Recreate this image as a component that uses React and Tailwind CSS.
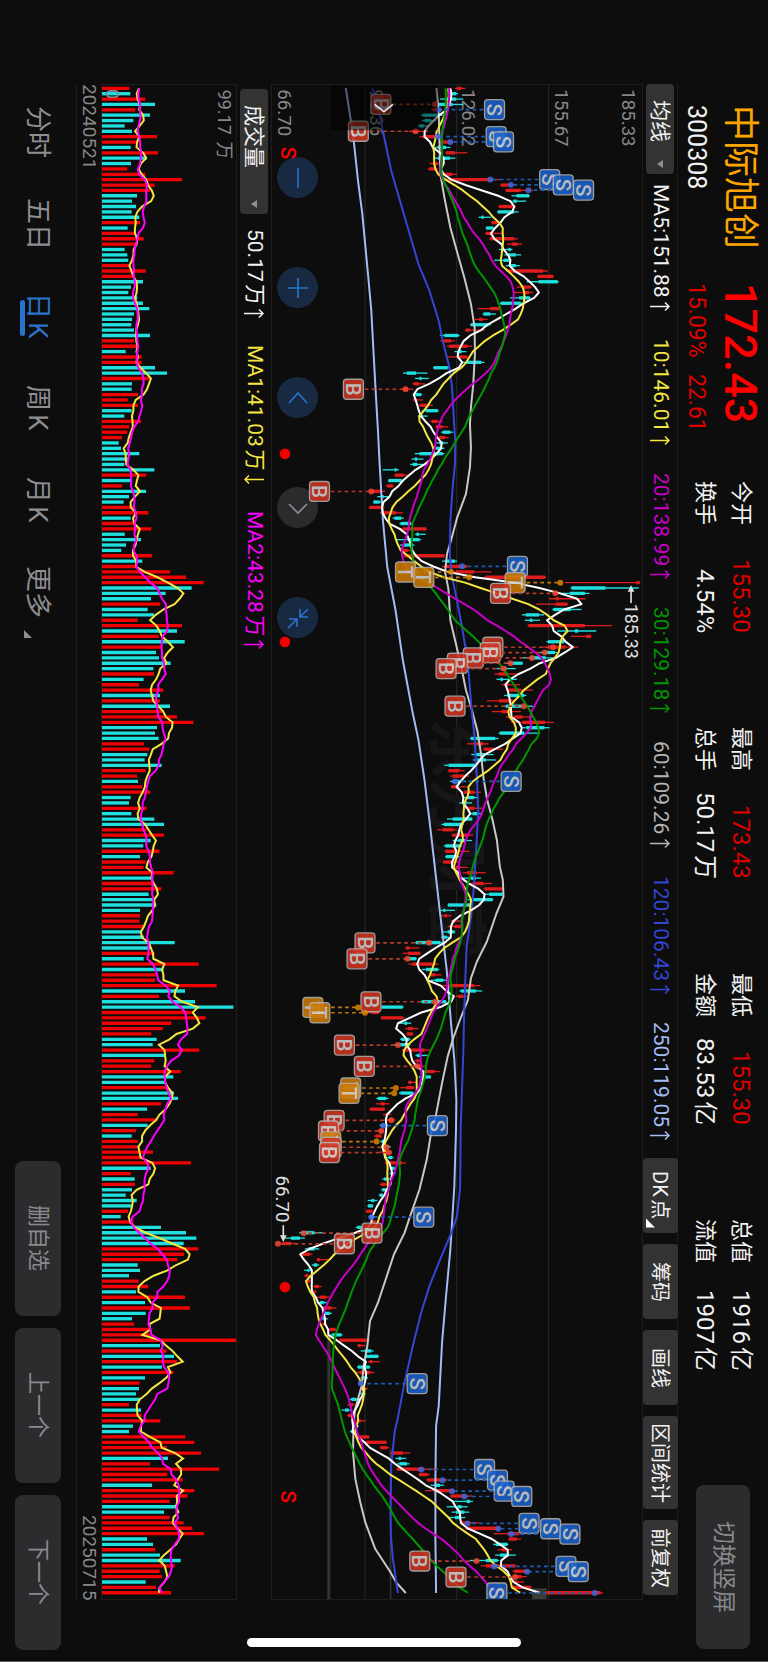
const RED = '#e01b1b';
const CYAN = '#1fdfdf';

const UP = 'R';

// [direction, low, body start, body end, high], one entry per trading day
const CANDLES = `R597,604,616,628 C583,588,600,606 C552,570,600,622 C530,545,590,622 R526,530,545,560 C495,500,545,560 C497,505,525,540 C485,490,503,515
R458,470,487,516 R490,500,545,550 R550,555,583,592 C537,545,570,583 R568,570,597,634 C533,545,582,598 R520,530,545,550 R515,520,540,545
R548,555,588,603 R565,580,712,732 R733,735,757,770 R748,750,795,832 C767,782,820,822 C770,773,783,811 R727,730,770,781 C724,726,775,788
C668,677,683,705 R706,708,725,735 C689,691,712,720 R687,690,708,743 R700,703,775,786 R753,768,785,799 C729,758,765,770 C746,758,780,796
C715,743,760,762 C750,763,780,792 R751,757,862,876 R844,846,893,894 C813,848,906,909 R783,800,825,828 R775,805,820,832 C763,790,822,825
C731,735,795,800 R665,703,730,733 C680,683,703,720 R657,670,680,695 C642,645,698,705 R627,629,642,687 C551,565,607,611 R553,563,585,597
R572,580,635,648 C595,608,617,631 R572,608,633,636 C615,633,676,686 C531,533,575,582 C441,452,480,514 C477,490,496,518 R469,473,488,507
R438,442,455,472 C472,478,495,498 R469,475,482,501 R487,492,515,530 C497,510,545,548 C485,488,500,515 R523,527,545,560 R537,540,560,577
C555,560,583,592 R540,550,567,578 C540,550,562,575 C530,540,555,565 C476,490,560,565 C466,476,483,502 C462,470,483,502 C379,415,421,428
R414,416,443,460 C395,397,437,440 R388,393,410,413 R340,342,375,387 C363,375,382,400 C350,352,370,380 R337,340,375,385 R371,378,420,440
C409,415,435,443 C430,433,465,470 R430,440,510,513 C477,481,488,509 C422,455,490,495 C432,440,470,475 R430,435,455,465 R442,445,565,567
C558,568,597,603 R558,565,632,636 R565,600,655,707 R685,690,868,871 R928,1143,1153,1155 C945,948,1050,1150 C905,943,988,1002 R880,900,910,990
R841,900,935,937 C890,893,945,978 C798,810,850,865 C807,822,830,853 R815,818,988,1070 C905,958,968,1022 R945,992,1006,1008 C872,877,925,935
R860,875,930,968 C852,868,898,905 C800,822,870,905 C745,765,800,802 C722,735,752,780 R716,728,755,790 C722,734,741,783 R737,745,757,792
R750,758,795,832 C745,755,805,812 R693,730,770,775 C745,750,797,832 R708,738,760,795 R750,775,800,830 R765,800,868,895 C800,812,866,882
C728,732,805,847 C642,645,718,728 R633,658,682,698 R682,685,713,742 C646,660,685,713 C652,665,690,720 C565,578,657,660 R575,578,610,627
R583,590,625,640 C583,590,610,630 R584,586,605,632 R612,625,655,675 C622,635,655,665 C610,620,632,648 R627,633,655,678 C640,650,665,675
C573,590,648,650 C556,563,618,623 R543,560,592,602 R585,590,638,652 C590,607,630,648 C563,568,610,618 R566,568,600,640 C567,570,605,610
R559,562,595,610 R597,600,610,636 R620,633,662,689 C617,645,660,675 R640,650,683,709 R683,687,740,741 C686,700,740,741 C635,650,710,712
C574,576,645,650 C553,562,568,597 R555,565,573,586 R585,592,598,620 R575,595,615,620 C560,575,595,598 C555,560,573,580 C477,480,553,558
R447,450,460,490 R439,455,492,494 C452,455,480,482 R457,468,530,547 C497,510,545,550 R520,525,538,557 C525,538,562,572 R545,580,655,673
C610,615,660,679 R600,606,622,633 C495,497,570,572 C375,376,440,442 R325,345,368,370 R373,375,440,445 C430,445,453,465 R446,455,470,487
R450,453,470,472 C432,435,460,463 C414,430,460,463 R437,445,505,525 C478,482,495,515 R467,480,490,497 R470,483,497,510 R497,505,535,551
C488,505,524,525 R455,457,466,482 R432,450,473,475 C428,433,470,475 C360,365,390,397 R359,373,385,400 R338,342,385,387 R380,388,395,405
R390,398,412,418 C370,375,390,395 R365,370,380,385 R353,358,375,378 C372,376,384,388 C377,383,398,404 R368,385,402,408 C390,397,408,412
R385,390,437,450 C400,403,415,418 C400,403,413,418 C378,383,393,405 R370,375,388,395 C375,378,392,400 C367,370,380,387 C334,345,354,363
C333,335,350,351 R328,330,348,349 C337,340,352,355 R340,345,360,368 C298,303,316,318 C128,133,174,198 C86,103,130,145 R57,78,103,115
C145,155,174,188 R130,137,160,168 R180,182,190,217 C166,172,182,188 C143,153,158,165 R143,147,155,160 R145,152,160,167 R168,175,187,195
R163,168,177,180 R178,190,210,224 C183,190,202,213 R195,200,225,240 C202,205,220,226 C195,200,208,214 R195,200,208,212 R216,220,237,240
C222,228,255,258 R247,250,330,340 R302,305,313,328 C313,325,345,352 C325,328,366,367 R335,340,348,370 C302,305,340,342 R298,310,342,355
C313,320,328,335 C308,310,320,323 R310,315,325,335 C310,315,323,328 C280,285,300,312 R273,277,290,294 C255,266,277,285 R272,275,285,290
R295,305,313,328 C293,297,305,308 C280,284,293,298 R290,300,338,340 R325,330,390,392 R370,373,393,399 R400,405,440,462 C418,427,435,450
C423,430,452,460 R420,423,505,536 R487,489,515,522 R511,513,560,574 C524,535,552,564 R507,540,595,597 R581,585,628,648 C590,632,642,651
C572,605,617,635 C587,600,625,640 C577,597,613,628 R614,616,640,670 R628,630,730,733 R713,755,790,792 R757,760,783,796 C712,720,755,757
R726,738,755,768 C718,733,757,780 C641,690,725,730 R675,690,779,780 R770,775,815,820 R760,772,797,813 R768,775,785,805 R765,770,825,828
R870,872,1035,1042`
  .split(/\s+/)
  .map((s) => {
    const [low, from, to, high] = s.slice(1).split(',').map(Number);
    return { up: s[0] === UP, low, from, to, high };
  });

const VOLUMES = `R82 C85 R130 C159 R100 C144 C94 C68 C90 R165 R109 C86 R168 C134 C87 R75 R130 R240 R158 R144
C105 C90 C102 C89 C112 R114 C77 R102 R125 R102 C68 C76 C79 R86 R131 R99 C123 C87 C79 C106
C123 C142 C96 C90 C88 C96 C144 R96 R110 C71 R119 R119 C159 C195 R142 C90 C89 R108 R77 R108
C89 C67 R117 R82 R76 R60 C50 C57 C112 C78 C67 C157 R132 C90 R60 C132 C81 C65 R94 R139
C86 R99 R148 C68 C117 C72 C58 R150 C121 R106 R204 R252 R305 C269 C191 C147 R175 C137 C156 R107
R240 C225 R170 C248 R181 C162 C171 C206 C154 R156 C125 R111 R184 C174 R174 C204 R182 R225 R274 C165
C159 C170 R126 R142 C136 C128 C179 R131 R105 C108 R121 R145 C86 C81 R134 C88 C157 C186 R134 R186
C146 C124 R172 C114 R131 R125 R215 C154 R152 R178 C140 C159 C163 C114 R114 R112 R126 C119 C126 C218
C144 R158 C125 R290 C184 R164 R159 R344 C249 R171 C279 C394 R268 R311 R208 R182 R148 C164 C152 R292
C190 R157 R148 R236 C214 C192 R199 C216 C228 R177 C135 R107 R166 C137 R102 C89 R107 R111 R153 R119
R267 C146 R86 C98 R99 C90 C71 C104 C89 R79 C56 R94 C177 C252 C283 C245 R289 R246 R226 C107
C114 C81 R110 R139 C102 R249 C129 R264 C131 C90 R96 R144 R144 R402 C174 R194 C216 R225 C180 R214
C129 R113 C111 C102 C114 R81 C117 R119 R175 C93 C81 R250 R277 R194 R297 C198 R144 R352 R196 R242
C150 R277 R256 R203 C224 C186 R203 R245 R271 R306 C135 C153 R160 C174 C236 R218 R173 R180 C131 R162
R207`
  .split(/\s+/)
  .map((s) => ({ up: s[0] === UP, value: Number(s.slice(1)) }));

const STEP = 16.14;
const dayY = (i) => 52 + i * STEP;

const average = (values, size, seed) =>
  values.map((_, i) => {
    let sum = 0;
    for (let k = i - size + 1; k <= i; k++) sum += k < 0 ? seed : values[k];
    return sum / size;
  });

const toPoints = (values) => values.map((v, i) => `${v.toFixed(1)},${dayY(i).toFixed(1)}`).join(' ');

const CLOSES = CANDLES.map((c) => (c.up ? c.to : c.from));
const VOLUME_VALUES = VOLUMES.map((v) => v.value);

const MA_LINES = [
  {
    color: '#a4bcf5',
    points:
      '268,51 290,190 305,330 318,430 335,610 345,720 352,850 358,960 365,1080 370,1180 380,1350 393,1490 418,1620 440,1770 468,1920 487,2010 505,2129 520,2250 535,2380 552,2530 572,2700 585,2860 595,2970 601,3090 600,3180 595,3350 583,3540 570,3680 558,3820 548,4010 540,4070 538,4230 538,4410 540,4572',
  },
  {
    color: '#c8c8c8',
    points:
      '541,51 548,130 553,310 565,380 583,470 605,550 625,620 645,700 656,770 657,850 652,940 645,1010 642,1060 645,1130 642,1190 630,1270 604,1340 585,1410 573,1450 567,1505 577,1555 583,1650 602,1730 618,1800 630,1860 648,1920 665,1985 675,2050 683,2125 694,2190 710,2250 723,2310 732,2390 741,2430 743,2480 722,2530 693,2615 663,2675 645,2725 636,2790 612,2850 590,2910 575,2960 558,3040 537,3150 525,3190 512,3270 490,3360 462,3440 445,3490 413,3555 385,3640 365,3700 341,3755 333,3830 322,3890 316,3950 303,3995 295,4025 291,4080 290,4150 297,4230 312,4300 327,4360 357,4440 400,4505 420,4540 449,4572',
  },
  {
    color: '#3346d6',
    points:
      '348,51 365,110 382,190 405,300 440,420 487,580 520,660 548,750 560,810 580,890 588,950 595,1070 598,1110 597,1180 590,1250 583,1350 581,1450 588,1520 603,1590 618,1670 635,1770 648,1930 655,1990 663,2125 667,2220 662,2320 653,2460 645,2540 632,2630 628,2730 624,2850 622,2950 618,3060 614,3175 613,3300 612,3360 603,3440 588,3485 548,3580 520,3650 495,3730 470,3830 445,3940 425,4045 415,4090 405,4190 403,4330 404,4400 410,4470 425,4572',
  },
  { color: '#ffffff', points: toPoints(average(CLOSES, 5, 575)) },
  { color: '#f5e642', points: toPoints(average(CLOSES, 10, 572)) },
  { color: '#c800c8', points: toPoints(average(CLOSES, 20, 577)) },
  { color: '#009600', points: toPoints(average(CLOSES, 30, 567)) },
];

// [kind, badge x, y, anchor x on the candle]
const TRADES = [
  ['B', 374, 100, 537], ['S', 716, 116, 548], ['B', 306, 181, 478], ['S', 721, 197, 545], ['S', 743, 213, 583],
  ['S', 882, 326, 703], ['S', 923, 342, 765], ['S', 984, 358, 818], ['B', 291, 956, 448], ['B', 189, 1263, 345],
  ['S', 785, 1488, 618], ['T', 448, 1505, 585], ['T', 503, 1521, 640], ['T', 778, 1537, 914], ['B', 734, 1569, 899],
  ['B', 711, 1731, 892], ['B', 703, 1747, 867], ['B', 652, 1763, 829], ['B', 604, 1779, 764], ['B', 570, 1795, 744],
  ['B', 597, 1908, 804], ['S', 766, 2134, 597], ['B', 326, 2619, 519], ['B', 302, 2667, 454], ['B', 344, 2796, 537],
  ['T', 169, 2813, 305], ['T', 190, 2829, 326], ['B', 264, 2926, 425], ['B', 324, 2990, 484], ['T', 283, 3055, 419],
  ['T', 278, 3071, 414], ['B', 233, 3152, 405], ['S', 544, 3168, 381], ['B', 216, 3184, 375], ['T', 223, 3216, 361],
  ['B', 224, 3233, 391], ['B', 219, 3249, 398], ['S', 503, 3443, 345], ['B', 347, 3491, 142], ['B', 264, 3523, 64],
  ['S', 483, 3943, 313], ['S', 686, 4201, 495], ['S', 725, 4233, 560], ['S', 745, 4266, 588], ['S', 798, 4282, 625],
  ['S', 820, 4363, 635], ['S', 885, 4379, 727], ['S', 943, 4395, 766], ['B', 491, 4476, 662], ['S', 931, 4492, 715],
  ['S', 968, 4508, 814], ['B', 600, 4524, 778], ['S', 723, 4572, 1018],
];

const TRADE_COLORS = {
  B: { badge: '#cf3422', line: '#b93a28', dot: '#f0432f' },
  S: { badge: '#1a62cb', line: '#1b5cb8', dot: '#3f66d8' },
  T: { badge: '#cc7a05', line: '#c47808', dot: '#dd8400' },
};

const AXIS = [
  ['185.33', 1120],
  ['155.67', 917],
  ['126.02', 639],
  ['96.36', 361],
  ['66.70', 84],
];

const AVERAGES = [
  { label: 'MA5:151.88', className: 'text-[#f2f2f2]' },
  { label: '10:146.01', className: 'text-[#f5e642]' },
  { label: '20:138.99', className: 'text-[#c800c8]' },
  { label: '30:129.18', className: 'text-[#009600]' },
  { label: '60:109.26', className: 'text-[#b4b4b4]' },
  { label: '120:106.43', className: 'text-[#3346d6]' },
  { label: '250:119.05', className: 'text-[#a4bcf5]' },
];

const STATS = [
  [['今开', '155.30', true], ['换手', '4.54%', false]],
  [['最高', '173.43', true], ['总手', '50.17万', false]],
  [['最低', '155.30', true], ['金额', '83.53亿', false]],
  [['总值', '1916亿', false], ['流值', '1907亿', false]],
];

const TABS = ['分时', '五日', '日K', '周K', '月K', '更多'];

function SideText({ x, y, size, fill, anchor = 'start', weight = 400, children }) {
  return (
    <text transform={`translate(${x} ${y}) rotate(90)`} y={size * 0.36} fontSize={size} fontWeight={weight} fill={fill} textAnchor={anchor}>
      {children}
    </text>
  );
}

function Arrow({ down }) {
  return (
    <svg viewBox="0 0 20 9" className="h-[9px] w-5" fill="none" stroke="currentColor" strokeWidth="1.5" role="img" aria-label={down ? '下降' : '上升'}>
      <path d={down ? 'M20 4.5H1M5 0.5 1 4.5 5 8.5' : 'M0 4.5H19M15 0.5 19 4.5 15 8.5'} />
    </svg>
  );
}

function Reading({ label, className, down }) {
  return (
    <span className={`flex items-center gap-1 text-[21px] leading-none whitespace-nowrap ${className}`}>
      {label}
      <Arrow down={down} />
    </span>
  );
}

function Picker({ label, name, className }) {
  return (
    <div className={`relative flex w-7 shrink-0 rounded-sm bg-[#333333] ${className}`}>
      <select aria-label={name} className="h-full w-full cursor-pointer appearance-none bg-transparent pt-4 text-[21px] leading-7 text-[#f2f2f2] outline-none">
        <option>{label}</option>
      </select>
      <svg viewBox="0 0 6 8" className="pointer-events-none absolute right-[11px] bottom-[6px] h-2 w-1.5" aria-hidden="true">
        <path d="M0 4 6 0V8Z" fill="#8e8e93" />
      </svg>
    </div>
  );
}

function Header() {
  return (
    <header className="flex w-[90px] shrink-0 items-start pt-[105px] pb-[12px]">
      <div className="mr-2 flex h-[178px] flex-col gap-1.5">
        <h1 className="text-[36px] leading-10 text-[#ffa500]">中际旭创</h1>
        <p className="text-[25px] leading-9 text-[#f2f2f2]">300308</p>
      </div>
      <div className="mr-2 flex h-[198px] flex-col gap-1.5">
        <p className="text-[45px] leading-10 font-medium text-[#ff0000]">172.43</p>
        <p className="flex gap-4 text-[23px] leading-9 text-[#df0000]">
          <span>15.09%</span>
          <span>22.61</span>
        </p>
      </div>
      <div className="mr-[9px] flex gap-[94px]">
        {STATS.map((rows) => (
          <dl key={rows[0][0]} className="flex h-[152px] flex-col">
            {rows.map(([label, value, rise]) => (
              <div key={label} className="flex items-center justify-between leading-9">
                <dt className="text-[22px] text-[#f2f2f2]">{label}</dt>
                <dd className={`text-[24px] ${rise ? 'text-[#df0000]' : 'text-[#f2f2f2]'}`}>{value}</dd>
              </div>
            ))}
          </dl>
        ))}
      </div>
      <button type="button" className="mt-auto mr-[18px] h-[164px] w-[54px] rounded-lg bg-[#2c2c2e] text-[23px] text-[#8a8a8e]">
        切换竖屏
      </button>
    </header>
  );
}

function AverageBar() {
  const tool = 'flex w-[35px] items-center justify-center rounded-sm bg-[#333333] text-[20px] leading-none text-[#f2f2f2]';
  return (
    <div className="flex w-9 shrink-0 items-center border-r border-l border-[#1e1e1e]">
      <Picker label="均线" name="主图指标" className="h-[90px]" />
      <div className="flex gap-7 pt-[10px]">
        {AVERAGES.map(({ label, className }) => (
          <Reading key={label} label={label} className={className} />
        ))}
      </div>
      <div className="mt-auto mb-[5px] flex gap-[11px]">
        <button type="button" className={`${tool} relative h-[75px]`}>
          DK点
          <svg viewBox="0 0 10 10" className="absolute bottom-[5px] left-[3px] h-2.5 w-[9px]" aria-hidden="true">
            <path d="M0 0V10H10Z" fill="#fff" />
          </svg>
        </button>
        <button type="button" className={`${tool} h-[75px]`}>筹码</button>
        <button type="button" className={`${tool} h-[75px]`}>画线</button>
        <button type="button" className={`${tool} h-[93px]`}>区间统计</button>
        <button type="button" className={`${tool} h-[75px]`}>前复权</button>
      </div>
    </div>
  );
}

const CONTROLS = [
  { name: '缩小', icon: 'M10 0V20' },
  { name: '放大', icon: 'M10 0V20M0 10H20' },
  { name: '左移', icon: 'M1 15 10 5 19 15' },
  { name: '右移', icon: 'M1 6 10 15 19 6', muted: true },
  { name: '退出全屏', icon: 'M20 1 12 9M12 1V9H20M0 20 9 11M1 11H9V19' },
];

function ChartControls() {
  return (
    <div className="absolute top-[72px] left-[5px] flex gap-[69px]">
      {CONTROLS.map(({ name, icon, muted }) => (
        <button
          key={name}
          type="button"
          aria-label={name}
          className={`flex size-[41px] items-center justify-center rounded-full ${muted ? 'bg-[#2b2b2d] text-[#8e8e93]' : 'bg-[#172a42] text-[#2b74cc]'}`}
        >
          <svg viewBox="-1 -1 22 22" className="size-[22px]" fill="none" stroke="currentColor" strokeWidth="1.6" aria-hidden="true">
            <path d={icon} />
          </svg>
        </button>
      ))}
    </div>
  );
}

function TradeMark({ kind, x, y, anchor }) {
  const { badge, line, dot } = TRADE_COLORS[kind];
  const edge = x > anchor ? x - 34 : x + 34;
  return (
    <g>
      <path d={`M${edge} ${y}H${anchor}`} stroke={line} strokeWidth="5" strokeDasharray="11 10" />
      <circle cx={anchor} cy={y} r="9" fill={dot} opacity="0.85" />
      <g opacity="0.88">
        <rect x={x - 30} y={y - 30} width="60" height="60" rx="10" fill={badge} stroke="#b4b0ae" strokeWidth="4" />
        <SideText x={x} y={y} size={62} fill="#d2d2d2" anchor="middle" weight={500}>{kind}</SideText>
      </g>
    </g>
  );
}

function CandleChart() {
  return (
    <section className="relative min-w-0 flex-1 overflow-hidden border-t border-b border-[#1e1e1e]">
      <ChartControls />
      <svg
        viewBox="46 42 1114 4548"
        preserveAspectRatio="none"
        className="pointer-events-none absolute inset-0 h-full w-full font-['Roboto'] [writing-mode:horizontal-tb]"
      >
        {[326, 602, 879].map((x) => (
          <path key={x} d={`M${x} 42V4590`} stroke="#222222" strokeWidth="4" />
        ))}
        <g className="font-['Noto_Sans_CJK_SC']">
          <SideText x={601} y={1945} size={180} fill="#161616" weight={700}>东方财富</SideText>
        </g>
        <path d="M217 3795V4590" stroke="#333333" strokeWidth="9" />
        <path d="M403 4138V4590" stroke="#333333" strokeWidth="5" />
        <path d="M829 4558H873V4590H829Z" fill="#3a3a3a" />
        {AXIS.map(([label, x]) => (
          <SideText key={label} x={x} y={55} size={56} fill="#87878b">{label}</SideText>
        ))}
        {CANDLES.map(({ up, low, from, to, high }, i) => (
          <g key={i} stroke={up ? RED : CYAN}>
            <path d={`M${low} ${dayY(i)}H${high}`} strokeWidth="4" />
            <path d={`M${from} ${dayY(i)}H${to}`} strokeWidth="10" />
          </g>
        ))}
        {MA_LINES.map(({ color, points }) => (
          <polyline key={color} points={points} fill="none" stroke={color} strokeWidth="6" strokeLinejoin="round" />
        ))}
        {TRADES.map(([kind, x, y, anchor]) => (
          <TradeMark key={`${kind}${y}`} kind={kind} x={x} y={y} anchor={anchor} />
        ))}
        <rect x="222" y="42" width="323" height="136" fill="#000" opacity="0.5" />
        <path d="M355 100 383 122 410 100" fill="none" stroke="#e6e6e6" strokeWidth="5" />
        <g stroke="#e0e0e0" strokeWidth="5" fill="#e0e0e0">
          <path d="M1127 1598V1560M1121 1562H1133L1127 1550Z" />
          <path d="M80 3467V3502M74 3500H86L80 3512Z" />
        </g>
        <SideText x={1127} y={1600} size={54} fill="#e0e0e0">185.33</SideText>
        <SideText x={79} y={3318} size={56} fill="#e0e0e0">66.70</SideText>
        <SideText x={94} y={246} size={62} fill="#ff0000" anchor="middle" weight={500}>S</SideText>
        <SideText x={94} y={4283} size={62} fill="#ff0000" anchor="middle" weight={500}>S</SideText>
        {[1150, 1715, 3653].map((y) => (
          <circle key={y} cx="85" cy={y} r="16" fill="#f00000" />
        ))}
      </svg>
    </section>
  );
}

function VolumeBar() {
  return (
    <div className="flex w-9 shrink-0 items-center gap-[27px] border-r border-l border-[#1e1e1e] pt-[5px]">
      <Picker label="成交量" name="副图指标" className="-mb-3 h-[125px]" />
      <Reading label="50.17万" className="text-[#f2f2f2]" />
      <Reading label="MA1:41.03万" className="text-[#f5e642]" down />
      <Reading label="MA2:43.28万" className="text-[#ff00ff]" />
    </div>
  );
}

function VolumeChart() {
  return (
    <section className="relative w-[134px] shrink-0 border-t border-b border-[#1e1e1e]">
      <svg
        viewBox="0 42 402 4548"
        preserveAspectRatio="none"
        className="absolute inset-0 h-full w-full font-['Roboto','Noto_Sans_CJK_SC',sans-serif] [writing-mode:horizontal-tb]"
      >
        <SideText x={366} y={56} size={54} fill="#87878b">99.17万</SideText>
        {VOLUMES.map(({ up, value }, i) => (
          <path key={i} d={`M0 ${dayY(i)}H${value}`} stroke={up ? '#f00000' : CYAN} strokeWidth="10" />
        ))}
        <SideText x={32} y={54} size={54} fill="#87878b">0</SideText>
        <polyline points={toPoints(average(VOLUME_VALUES, 5, 118))} fill="none" stroke="#f5e642" strokeWidth="6" />
        <polyline points={toPoints(average(VOLUME_VALUES, 10, 115))} fill="none" stroke="#ff00ff" strokeWidth="6" />
      </svg>
    </section>
  );
}

function BottomBar() {
  return (
    <footer className="flex w-[76px] shrink-0 items-center pt-[86px] pb-[11px]">
      <nav className="flex">
        {TABS.map((tab) => (
          <a
            key={tab}
            href="#"
            aria-current={tab === '日K' ? 'page' : undefined}
            className={`relative flex h-[92px] items-center justify-center text-[26px] leading-9 ${tab === '日K' ? 'text-[#2b74cc]' : 'text-[#8e8e93]'}`}
          >
            {tab}
            {tab === '日K' && <span className="absolute top-[30px] left-0 h-9 w-[5px] rounded-full bg-[#2b74cc]" />}
            {tab === '更多' && (
              <svg viewBox="0 0 8 8" className="absolute bottom-0 left-1 size-2" aria-hidden="true">
                <path d="M0 0V8H8Z" fill="#8e8e93" />
              </svg>
            )}
          </a>
        ))}
      </nav>
      <div className="mt-auto flex gap-3">
        {['删自选', '上一个', '下一个'].map((label) => (
          <button key={label} type="button" className="h-[155px] w-[46px] rounded-lg bg-[#2c2c2e] text-[22px] text-[#8a8a8e]">
            {label}
          </button>
        ))}
      </div>
    </footer>
  );
}

export default function App() {
  return (
    <div className="relative flex h-screen w-full flex-col overflow-hidden border-b border-[#5a5a5a] bg-[#0d0d0d] font-['Roboto','Noto_Sans_CJK_SC',sans-serif] [text-autospace:normal] [text-orientation:sideways] [writing-mode:vertical-rl]">
      <Header />
      <main className="mt-[84px] mb-[61px] flex min-w-0 flex-1 flex-col">
        <AverageBar />
        <CandleChart />
        <VolumeBar />
        <VolumeChart />
        <div className="flex w-[26px] shrink-0 items-center justify-between border-r border-l border-[#1e1e1e] text-[19px] leading-none text-[#87878b]">
          <span>20240521</span>
          <span>20250715</span>
        </div>
      </main>
      <BottomBar />
      <div className="absolute bottom-[14px] left-1/2 h-[9px] w-[274px] -translate-x-1/2 rounded-full bg-white" />
    </div>
  );
}
